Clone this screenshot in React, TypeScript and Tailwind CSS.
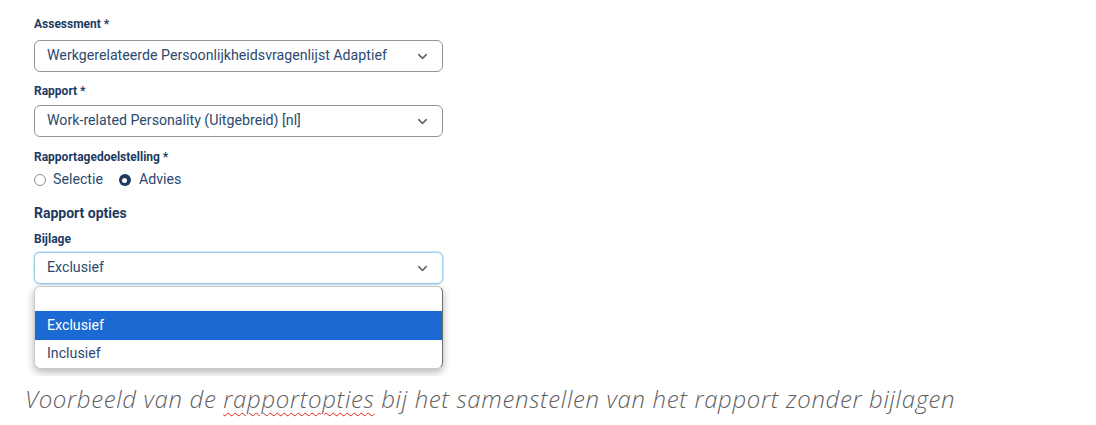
import React from 'react';
import { ChevronDown } from 'lucide-react';

const Label: React.FC<{ text: string; className?: string }> = ({ text, className }) => (
  <div className={`h-4 text-[12px] leading-4 font-bold text-[#1e3a5f] ${className ?? ''}`}>{text}</div>
);

const Select: React.FC<{ value: string; focused?: boolean; className?: string }> = ({ value, focused, className }) => (
  <div
    className={`flex h-8 w-[409px] items-center justify-between rounded-md border bg-white pl-3 pr-3 ${
      focused ? 'border-[#9ed0ea] shadow-[0_0_0_1px_#cfe8f5]' : 'border-[#8f959c]'
    } ${className ?? ''}`}
  >
    <span className="text-[14.2px] text-[#2b4a6f]">{value}</span>
    <ChevronDown size={15} strokeWidth={2.5} className="text-[#5d6670]" />
  </div>
);

const App: React.FC = () => {
  return (
    <div className="min-h-screen bg-white" style={{ fontFamily: 'Roboto, "Liberation Sans", sans-serif' }}>
      <div className="w-[450px] overflow-hidden pl-[34px] pt-4 pb-[7px]">
        <Label text="Assessment *" />
        <Select value="Werkgerelateerde Persoonlijkheidsvragenlijst Adaptief" className="mt-2" />
        <Label text="Rapport *" className="mt-[11px]" />
        <Select value="Work-related Personality (Uitgebreid) [nl]" className="mt-[6px]" />
        <Label text="Rapportagedoelstelling *" className="mt-3" />
        <div className="mt-[5px] flex h-5 items-center text-[14.2px] text-[#2b4a6f]">
          <span className="ml-[0px] h-[12px] w-[12px] rounded-full border border-[#8a8f96] bg-white" />
          <span className="ml-[7px]">Selectie</span>
          <span className="ml-[16px] flex h-[12px] w-[12px] items-center justify-center rounded-full bg-[#1e3a5f]">
            <span className="h-[5px] w-[5px] rounded-full bg-white" />
          </span>
          <span className="ml-[8px]">Advies</span>
        </div>
        <div className="mt-[13px] h-5 text-[14px] font-bold leading-5 text-[#1e3a5f]">Rapport opties</div>
        <Label text="Bijlage" className="mt-2" />
        <Select value="Exclusief" focused className="mt-[5px]" />
        <div className="mt-[2px] w-[409px] overflow-hidden rounded-md border border-[#c9c9c9] border-r-[#6b6b6b] bg-white text-[14.2px] shadow-[0_3px_8px_rgba(0,0,0,0.3)]">
          <div className="h-6" />
          <div className="flex h-[29px] items-center bg-[#1b69d3] pl-3 text-white">Exclusief</div>
          <div className="flex h-[28px] items-center pl-3 text-[#2b4a6f]">Inclusief</div>
        </div>
      </div>
      <p
        className="mt-[8px] pl-[25px] text-[24px] font-[350] italic leading-[30px] tracking-[0.65px] text-[#5f5f5f]"
        style={{ fontFamily: '"Open Sans", Lato, sans-serif' }}
      >
        Voorbeeld van de{' '}
        <span className="underline decoration-wavy decoration-[#e0201b] decoration-1 underline-offset-4">rapportopties</span>{' '}
        bij het samenstellen van het rapport zonder bijlagen
      </p>
    </div>
  );
};

export default App;
